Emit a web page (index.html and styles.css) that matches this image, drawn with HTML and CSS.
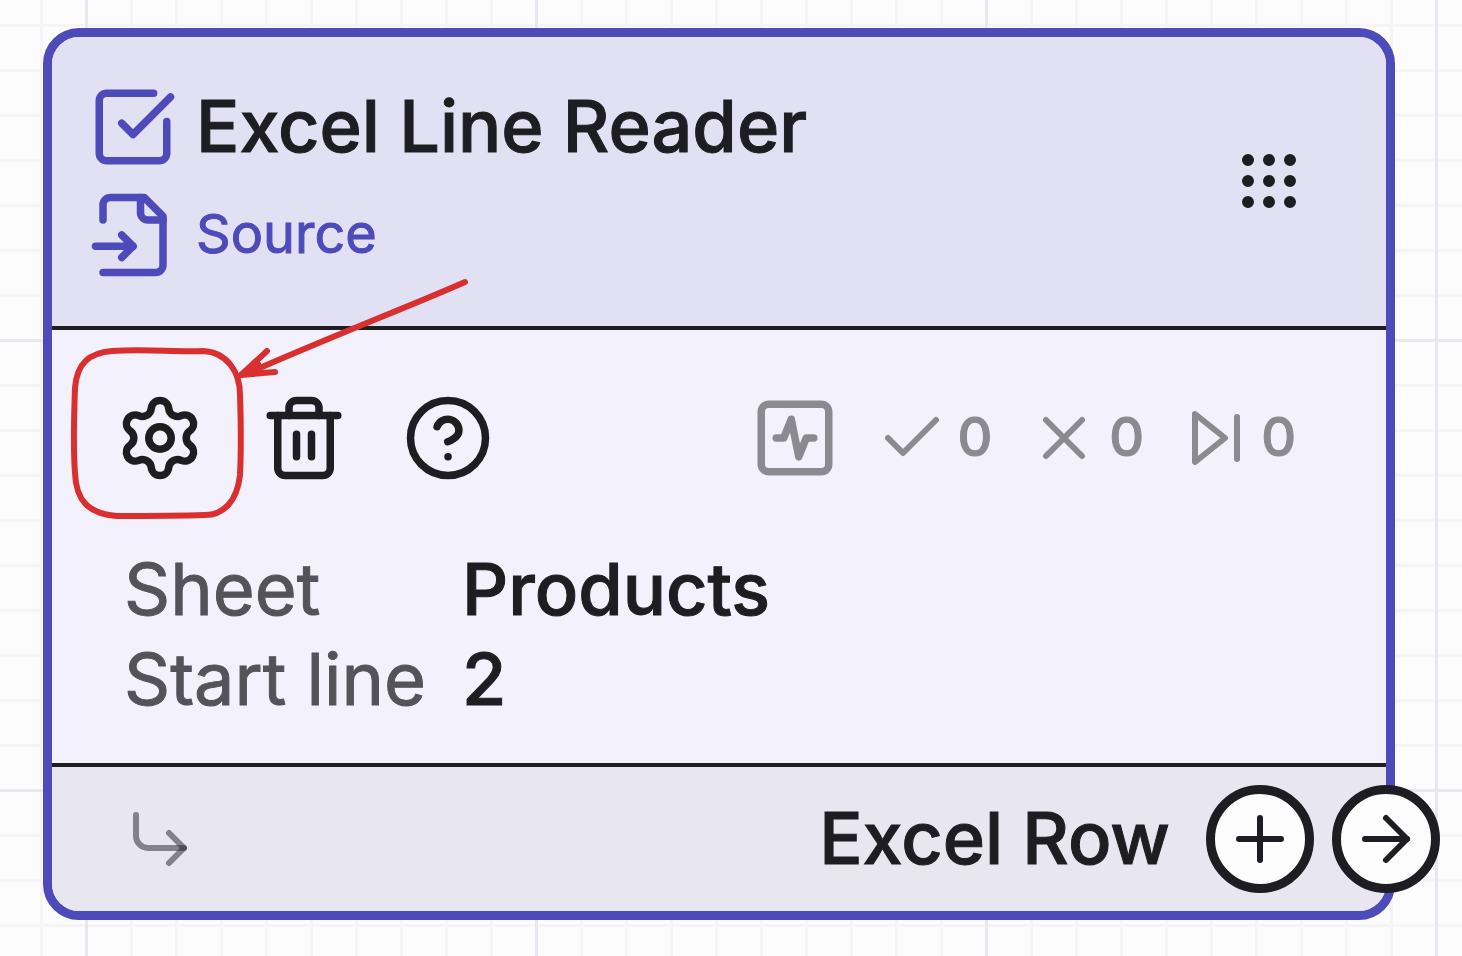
FILE: index.html
```
<!DOCTYPE html>
<html lang="en">
<head>
  <meta charset="UTF-8">
  <meta name="viewport" content="width=device-width, initial-scale=1.0">
  <title>Excel Line Reader</title>
  <link rel="stylesheet" href="styles.css">
</head>
<body>
  <article class="node">
    <!-- Header -->
    <header class="node-header">
      <div class="node-heading">
        <div class="heading-row">
          <svg class="icon" viewBox="0 0 24 24" aria-hidden="true"><path d="M21 10.5V19a2 2 0 0 1-2 2H5a2 2 0 0 1-2-2V5a2 2 0 0 1 2-2h12.5"/><path d="m9 11 3 3L22 4"/></svg>
          <h1>Excel Line Reader</h1>
        </div>
        <div class="heading-row">
          <svg class="icon" viewBox="0 0 24 24" aria-hidden="true"><path d="M4 22h14a2 2 0 0 0 2-2V7l-5-5H6a2 2 0 0 0-2 2v4"/><path d="M14 2v4a2 2 0 0 0 2 2h4"/><path d="M2 15h10"/><path d="m9 18 3-3-3-3"/></svg>
          <p class="kind">Source</p>
        </div>
      </div>
      <button class="handle" type="button" aria-label="Move">
        <svg class="icon icon-small" viewBox="0 0 24 24"><circle cx="12" cy="5" r="1"/><circle cx="19" cy="5" r="1"/><circle cx="5" cy="5" r="1"/><circle cx="12" cy="12" r="1"/><circle cx="19" cy="12" r="1"/><circle cx="5" cy="12" r="1"/><circle cx="12" cy="19" r="1"/><circle cx="19" cy="19" r="1"/><circle cx="5" cy="19" r="1"/></svg>
      </button>
    </header>

    <!-- Actions, counters and parameters -->
    <div class="node-body">
      <div class="toolbar">
        <div class="actions">
          <button type="button" aria-label="Settings">
            <svg class="icon" viewBox="0 0 24 24"><path d="M9.671 4.136a2.34 2.34 0 0 1 4.659 0 2.34 2.34 0 0 0 3.319 1.915 2.34 2.34 0 0 1 2.33 4.033 2.34 2.34 0 0 0 0 3.831 2.34 2.34 0 0 1-2.33 4.033 2.34 2.34 0 0 0-3.319 1.915 2.34 2.34 0 0 1-4.659 0 2.34 2.34 0 0 0-3.32-1.915 2.34 2.34 0 0 1-2.33-4.033 2.34 2.34 0 0 0 0-3.831A2.34 2.34 0 0 1 6.35 6.051a2.34 2.34 0 0 0 3.319-1.915"/><circle cx="12" cy="12" r="3"/></svg>
          </button>
          <button type="button" aria-label="Delete">
            <svg class="icon" viewBox="0 0 24 24"><path d="M3 6h18"/><path d="M19 6v14a2 2 0 0 1-2 2H7a2 2 0 0 1-2-2V6"/><path d="M8 6V4a2 2 0 0 1 2-2h4a2 2 0 0 1 2 2v2"/><path d="M10 11v6"/><path d="M14 11v6"/></svg>
          </button>
          <button type="button" aria-label="Help">
            <svg class="icon" viewBox="0 0 24 24"><circle cx="12" cy="12" r="10"/><path d="M9.09 9a3 3 0 0 1 5.83 1c0 2-3 3-3 3"/><path d="M12 17h.01"/></svg>
          </button>
        </div>
        <div class="stats">
          <svg class="icon" viewBox="0 0 24 24" aria-hidden="true"><rect x="3" y="3" width="18" height="18" rx="2"/><path d="M17 12h-2l-2 5-2-10-2 5H7"/></svg>
          <div class="stat">
            <svg class="icon icon-small" viewBox="0 0 24 24" aria-hidden="true"><path d="M20 6 9 17l-5-5"/></svg>
            <span>0</span>
          </div>
          <div class="stat">
            <svg class="icon icon-small" viewBox="0 0 24 24" aria-hidden="true"><path d="M18 6 6 18"/><path d="m6 6 12 12"/></svg>
            <span>0</span>
          </div>
          <div class="stat">
            <svg class="icon icon-small" viewBox="0 0 24 24" aria-hidden="true"><path d="m5 4 10 8-10 8z"/><path d="M19 5v14"/></svg>
            <span>0</span>
          </div>
        </div>
      </div>
      <dl class="params">
        <dt>Sheet</dt>
        <dd>Products</dd>
        <dt>Start line</dt>
        <dd>2</dd>
      </dl>
    </div>

    <!-- Output -->
    <footer class="node-footer">
      <svg class="icon icon-small branch" viewBox="0 0 24 24" aria-hidden="true"><path d="M4 4v7a4 4 0 0 0 4 4h12"/><path d="m15 10 5 5-5 5"/></svg>
      <div class="output">
        <span class="output-name">Excel Row</span>
        <button class="port" type="button" aria-label="Add">
          <svg class="icon icon-small" viewBox="0 0 24 24"><path d="M5 12h14"/><path d="M12 5v14"/></svg>
        </button>
        <button class="port" type="button" aria-label="Connect">
          <svg class="icon icon-small" viewBox="0 0 24 24"><path d="M5 12h14"/><path d="m12 5 7 7-7 7"/></svg>
        </button>
      </div>
    </footer>

    <!-- Hand-drawn marker around the settings button -->
    <svg class="marker" viewBox="68 276 406 250" aria-hidden="true">
      <path d="M112 351C145 349 175 352 203 351C227 352 240 372 240 395C241 425 241 455 240 475C237 502 223 515 205 515C175 516 145 516 117 516C88 514 76 500 75 473C73 447 74 415 75 388C77 363 89 353 112 351Z"/>
      <path d="M465 282C420 302 350 329 262 367L241 375L267 351M241 375L275 372M241 375L258 364"/>
    </svg>
  </article>
</body>
</html>
```
FILE: styles.css
```
:root {
  --primary: #4d4aba;
  --ink: #1e1d22;
  --muted: #8b8a90;
  --paper: #fcfcfc;
}
* {
  box-sizing: border-box;
}
body {
  margin: 0;
  min-height: 100vh;
  font-family: Inter, sans-serif;
  -webkit-text-stroke: 1px currentColor;
  color: var(--ink);
  background-color: var(--paper);
  background-image:
    linear-gradient(90deg, #e9e7ed 3px, transparent 3px),
    linear-gradient(#e9e7ed 3px, transparent 3px),
    linear-gradient(90deg, #f5f4f7 3px, transparent 3px),
    linear-gradient(#f5f4f7 3px, transparent 3px);
  background-size: 450px 450px, 450px 450px, 45px 45px, 45px 45px;
  background-position: 85px 339px;
  display: flow-root;
}
h1, p, dl, dd {
  margin: 0;
}
button {
  font: inherit;
  color: inherit;
  background: none;
  border: 0;
  padding: 0;
  cursor: pointer;
  display: flex;
  align-items: center;
  justify-content: center;
}
.icon {
  width: 90px;
  height: 90px;
  flex: none;
  fill: none;
  stroke: currentColor;
  stroke-width: 2;
  stroke-linecap: round;
  stroke-linejoin: round;
}
.icon-small {
  width: 72px;
  height: 72px;
}
.node {
  position: relative;
  margin: 28px 67px 36px 43px;
  border: 9px solid var(--primary);
  border-radius: 36px;
  background-color: #f3f1fb;
}
.node-header {
  display: flex;
  align-items: center;
  justify-content: space-between;
  padding: 36px 81px 37px 36px;
  background-color: #e2e1f3;
  border-bottom: 4px solid var(--ink);
  border-radius: 27px 27px 0 0;
}
.heading-row {
  display: flex;
  align-items: center;
  gap: 18px;
  height: 108px;
  color: var(--primary);
}
/* lifts the caps to the middle of the icons */
h1, .kind, .stat span, .output-name {
  padding-bottom: 3px;
}
h1 {
  font-size: 72px;
  font-weight: 500;
  color: var(--ink);
}
.kind {
  font-size: 54px;
}
.handle circle {
  fill: currentColor;
}
.node-body {
  padding: 36px 36px 39px;
}
.toolbar {
  display: flex;
  align-items: center;
  justify-content: space-between;
  padding-right: 54px;
}
.actions {
  display: flex;
}
.actions button {
  width: 144px;
  height: 144px;
}
.stats {
  display: flex;
  align-items: center;
  gap: 36px;
  color: var(--muted);
}
.stat {
  display: flex;
  align-items: center;
  gap: 9px;
  font-size: 54px;
  font-weight: 500;
}
.params {
  display: grid;
  grid-template-columns: max-content 1fr;
  column-gap: 36px;
  margin-top: 34px;
  padding: 0 36px;
  font-size: 72px;
  line-height: 90px;
}
.params dt {
  color: #545359;
}
.params dd {
  font-weight: 500;
}
.node-footer {
  display: flex;
  align-items: center;
  justify-content: space-between;
  height: 148px;
  padding-left: 72px;
  background-color: #e8e6ef;
  border-top: 4px solid var(--ink);
  border-radius: 0 0 27px 27px;
}
.branch {
  stroke: rgba(30, 29, 34, 0.5);
}
/* last port sits on the card's edge */
.output {
  display: flex;
  align-items: center;
  gap: 18px;
  margin-right: -54px;
}
.output-name {
  margin-right: 18px;
  font-size: 72px;
  font-weight: 500;
}
.port {
  width: 108px;
  height: 108px;
  border: 9px solid var(--ink);
  border-radius: 50%;
  background-color: var(--paper);
}
.marker {
  position: absolute;
  left: 16px;
  top: 239px;
  width: 406px;
  height: 250px;
  fill: none;
  stroke: #d9302f;
  stroke-width: 6;
  stroke-linecap: round;
  stroke-linejoin: round;
  pointer-events: none;
}
```
